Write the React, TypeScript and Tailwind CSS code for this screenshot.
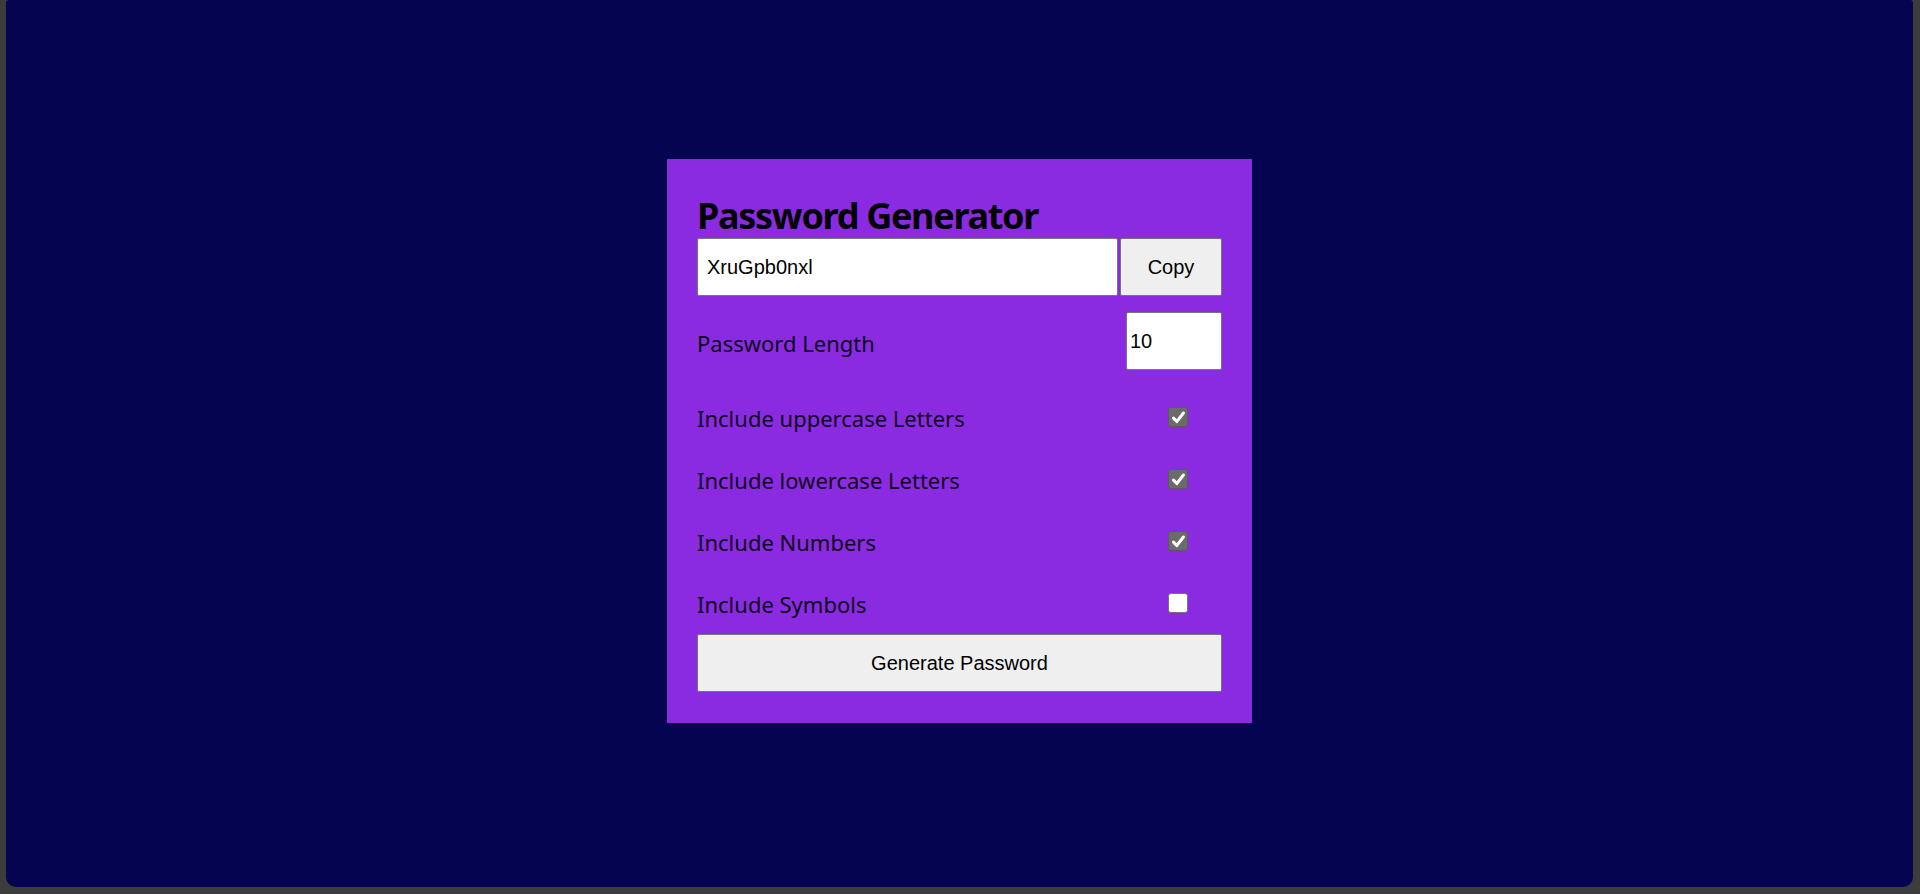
import React, { useState } from "react";

function Check({ checked }: { checked: boolean }) {
  return checked ? (
    <div className="w-[20px] h-[20px] rounded-[3px] bg-[#6b6b6b] border border-[#5a5a5a] flex items-center justify-center">
      <svg width="15" height="15" viewBox="0 0 14 14">
        <path d="M2.3 7.6 L5.4 10.8 L11.6 2.8" fill="none" stroke="#ffffff" strokeWidth="2.8" strokeLinecap="round" strokeLinejoin="round" />
      </svg>
    </div>
  ) : (
    <div className="w-[20px] h-[20px] rounded-[3px] bg-white border border-[#767676]" />
  );
}

export default function App() {
  const [pw] = useState("XruGpb0nxl");
  const rows = [
    { label: "Include uppercase Letters", checked: true },
    { label: "Include lowercase Letters", checked: true },
    { label: "Include Numbers", checked: true },
    { label: "Include Symbols", checked: false },
  ];
  return (
    <div className="w-full h-[894px] bg-[#3c3c3c] pl-[6px] pr-[7px] pb-[7px]">
      <div className="w-full h-full bg-[#050450] rounded-tl-[3px] rounded-tr-[3px] rounded-b-[10px] flex items-center justify-center pb-[5px]">
        <div className="w-[585px] bg-[#8a2be2] px-[30px] pt-[31px] pb-[31px] flex flex-col">
          <h1 className="text-[36px] leading-[48px] font-bold text-black m-0 tracking-[-1.3px] font-['Noto_Sans',sans-serif] translate-y-[2px]">
            Password Generator
          </h1>
          <div className="flex h-[58px] gap-[2px]">
            <div className="flex-1 bg-white border border-[#767676] rounded-[2px] flex items-center pl-[9px] text-[20px] text-black font-['Liberation_Sans',Arial,sans-serif]">
              {pw}
            </div>
            <div className="w-[102px] bg-[#efefef] border border-[#767676] rounded-[2px] flex items-center justify-center text-[20px] text-black font-['Liberation_Sans',Arial,sans-serif]">
              Copy
            </div>
          </div>
          <div className="flex items-center justify-between mt-[16px] h-[58px]">
            <span className="text-[22px] text-[#0d0318] font-['Noto_Sans',sans-serif] translate-y-[2px]">Password Length</span>
            <div className="w-[96px] h-[58px] bg-white border border-[#767676] rounded-[2px] flex items-center pl-[3px] text-[20px] text-black font-['Liberation_Sans',Arial,sans-serif]">
              10
            </div>
          </div>
          {rows.map((r, i) => (
            <div
              key={r.label}
              className={
                "flex items-center justify-between h-[28px] " +
                (i === 0 ? "mt-[33px]" : "mt-[34px]")
              }
            >
              <span className="text-[22px] text-[#0d0318] font-['Noto_Sans',sans-serif] translate-y-[1px]">{r.label}</span>
              <div className="mr-[34px]">
                <Check checked={r.checked} />
              </div>
            </div>
          ))}
          <div className="mt-[17px] h-[58px] bg-[#efefef] border border-[#767676] rounded-[2px] flex items-center justify-center text-[20px] text-black font-['Liberation_Sans',Arial,sans-serif]">
            Generate Password
          </div>
        </div>
      </div>
    </div>
  );
}
